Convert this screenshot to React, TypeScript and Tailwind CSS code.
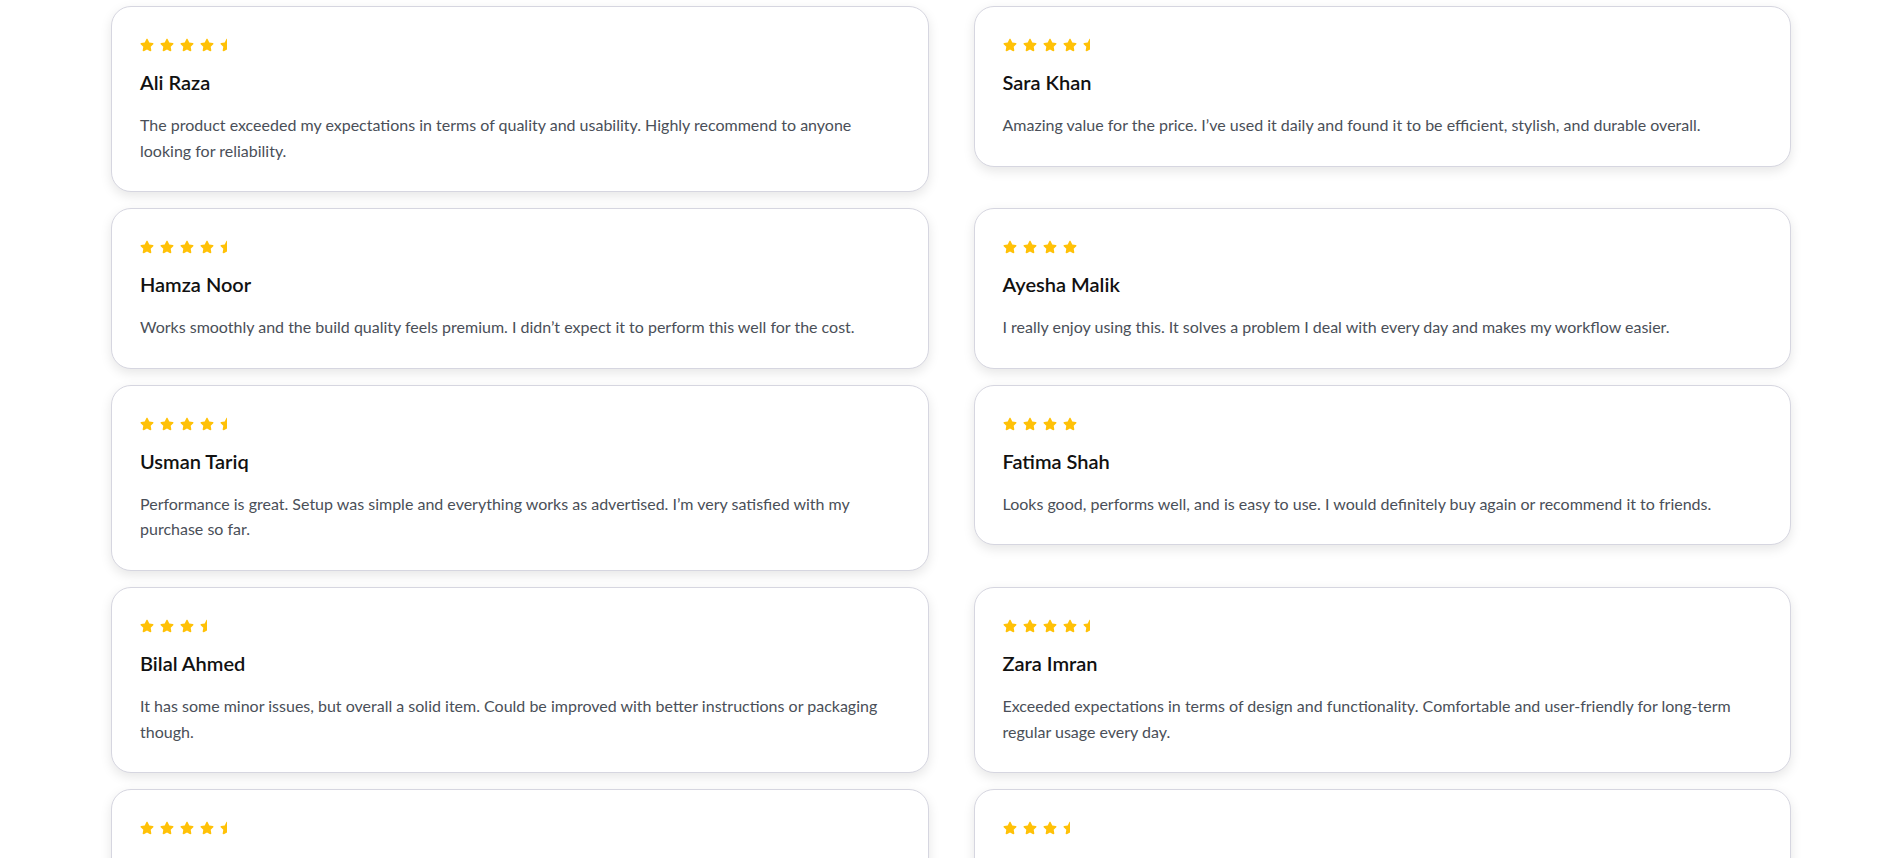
import { FaStar, FaStarHalf } from 'react-icons/fa'

type Review = {
  name: string
  rating: number
  text: string
}

const reviews: Review[] = [
  {
    name: 'Ali Raza',
    rating: 4.5,
    text: 'The product exceeded my expectations in terms of quality and usability. Highly recommend to anyone looking for reliability.',
  },
  {
    name: 'Sara Khan',
    rating: 4.5,
    text: 'Amazing value for the price. I’ve used it daily and found it to be efficient, stylish, and durable overall.',
  },
  {
    name: 'Hamza Noor',
    rating: 4.5,
    text: 'Works smoothly and the build quality feels premium. I didn’t expect it to perform this well for the cost.',
  },
  {
    name: 'Ayesha Malik',
    rating: 4,
    text: 'I really enjoy using this. It solves a problem I deal with every day and makes my workflow easier.',
  },
  {
    name: 'Usman Tariq',
    rating: 4.5,
    text: 'Performance is great. Setup was simple and everything works as advertised. I’m very satisfied with my purchase so far.',
  },
  {
    name: 'Fatima Shah',
    rating: 4,
    text: 'Looks good, performs well, and is easy to use. I would definitely buy again or recommend it to friends.',
  },
  {
    name: 'Bilal Ahmed',
    rating: 3.5,
    text: 'It has some minor issues, but overall a solid item. Could be improved with better instructions or packaging though.',
  },
  {
    name: 'Zara Imran',
    rating: 4.5,
    text: 'Exceeded expectations in terms of design and functionality. Comfortable and user-friendly for long-term regular usage every day.',
  },
  {
    name: 'Hassan Ali',
    rating: 4.5,
    text: 'Solid purchase overall. Delivery was quick and the item matched the description perfectly.',
  },
  {
    name: 'Maryam Iqbal',
    rating: 3.5,
    text: 'Decent product for everyday use, though a few small details could be refined in future versions.',
  },
]

function Stars({ rating }: { rating: number }) {
  const full = Math.floor(rating)
  const half = rating % 1 !== 0
  return (
    <div className="flex h-5 items-center gap-[6px] text-[#ffc107]">
      {Array.from({ length: full }).map((_, i) => (
        <FaStar key={i} size={14} />
      ))}
      {half && <FaStarHalf size={14} />}
    </div>
  )
}

export default function App() {
  return (
    <div className="min-h-screen bg-white font-['Lato','Open_Sans',sans-serif]">
      <div className="grid grid-cols-2 items-start gap-x-[45px] gap-y-4 pl-[111px] pr-[102px] pt-[6px] pb-10">
        {reviews.map((review, index) => (
          <div
            key={index}
            className="rounded-[20px] border border-[#d6d6e0] bg-white p-7 shadow-[0_4px_12px_rgba(0,0,0,0.1)]"
          >
            <Stars rating={review.rating} />
            <h3 className="mt-[13px] text-xl leading-7 font-semibold text-[#111]">
              {review.name}
            </h3>
            <p className="mt-4 text-base leading-[1.6] text-[#4a4f58]">{review.text}</p>
          </div>
        ))}
      </div>
    </div>
  )
}
